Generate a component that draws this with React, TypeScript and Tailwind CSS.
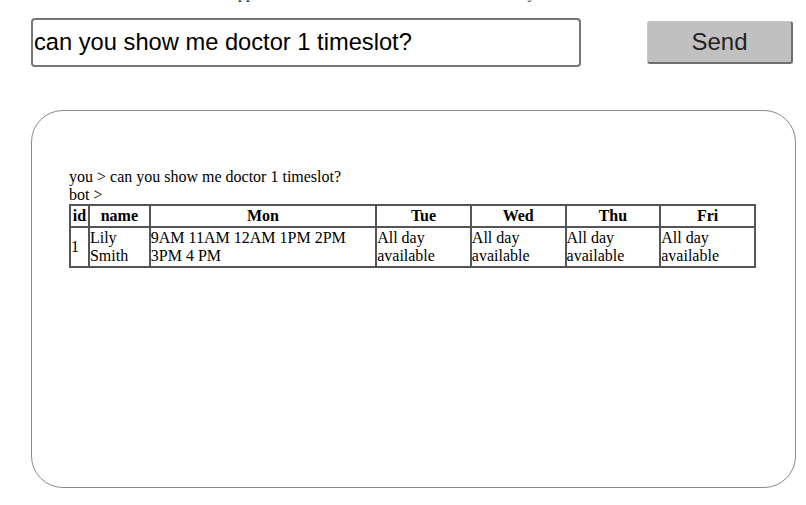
const days = ['Tue', 'Wed', 'Thu', 'Fri'];

export default function App() {
  return (
    <div className="h-[505px] overflow-hidden bg-white font-['Liberation_Serif',serif] text-black">
      <p className="-mt-[16px] h-[18px] text-center text-[16px] leading-[18px] text-[#333]">
        Application to check the doctors schedule easily online
      </p>

      <div className="mt-[16px] ml-[31px] flex items-center">
        <input
          className="h-[49px] w-[550px] rounded-[4px] border-2 border-[#767676] px-[1px] font-['Liberation_Sans',Arial,sans-serif] text-[23.7px] text-black outline-none"
          defaultValue="can you show me doctor 1 timeslot?"
        />
        <button className="ml-[66px] h-[43px] w-[146px] rounded-[3px] border border-b-2 border-r-2 border-[#c4c4c4] border-b-[#6f6f6f] border-r-[#6f6f6f] bg-[#c0c0c0] font-['Liberation_Sans',Arial,sans-serif] text-[24px] text-[#222]">
          Send
        </button>
      </div>

      <div className="mt-[43px] ml-[31px] h-[378px] w-[765px] rounded-[32px] border border-[#8a8a8a] px-[37px] pt-[57px] text-[16px] leading-[18px]">
        <div>you &gt; can you show me doctor 1 timeslot?</div>
        <div>bot &gt;</div>
        <table className="w-[687px] border-separate border-spacing-0 border border-[#555] text-[16px] leading-[18px]">
          <thead>
            <tr>
              <th className="w-[19px] border border-[#555] px-0 py-[1px] font-bold">id</th>
              <th className="w-[61px] border border-[#555] px-0 py-[1px] font-bold">name</th>
              <th className="w-[228px] border border-[#555] px-0 py-[1px] font-bold">Mon</th>
              {days.map((d) => (
                <th key={d} className="w-[95px] border border-[#555] px-0 py-[1px] font-bold">
                  {d}
                </th>
              ))}
            </tr>
          </thead>
          <tbody>
            <tr>
              <td className="border border-[#555] px-0 py-[1px] align-middle">1</td>
              <td className="border border-[#555] px-0 py-[1px]">Lily Smith</td>
              <td className="border border-[#555] px-0 py-[1px]">9AM 11AM 12AM 1PM 2PM 3PM 4 PM</td>
              {days.map((d) => (
                <td key={d} className="border border-[#555] px-0 py-[1px]">
                  All day available
                </td>
              ))}
            </tr>
          </tbody>
        </table>
      </div>
    </div>
  );
}
